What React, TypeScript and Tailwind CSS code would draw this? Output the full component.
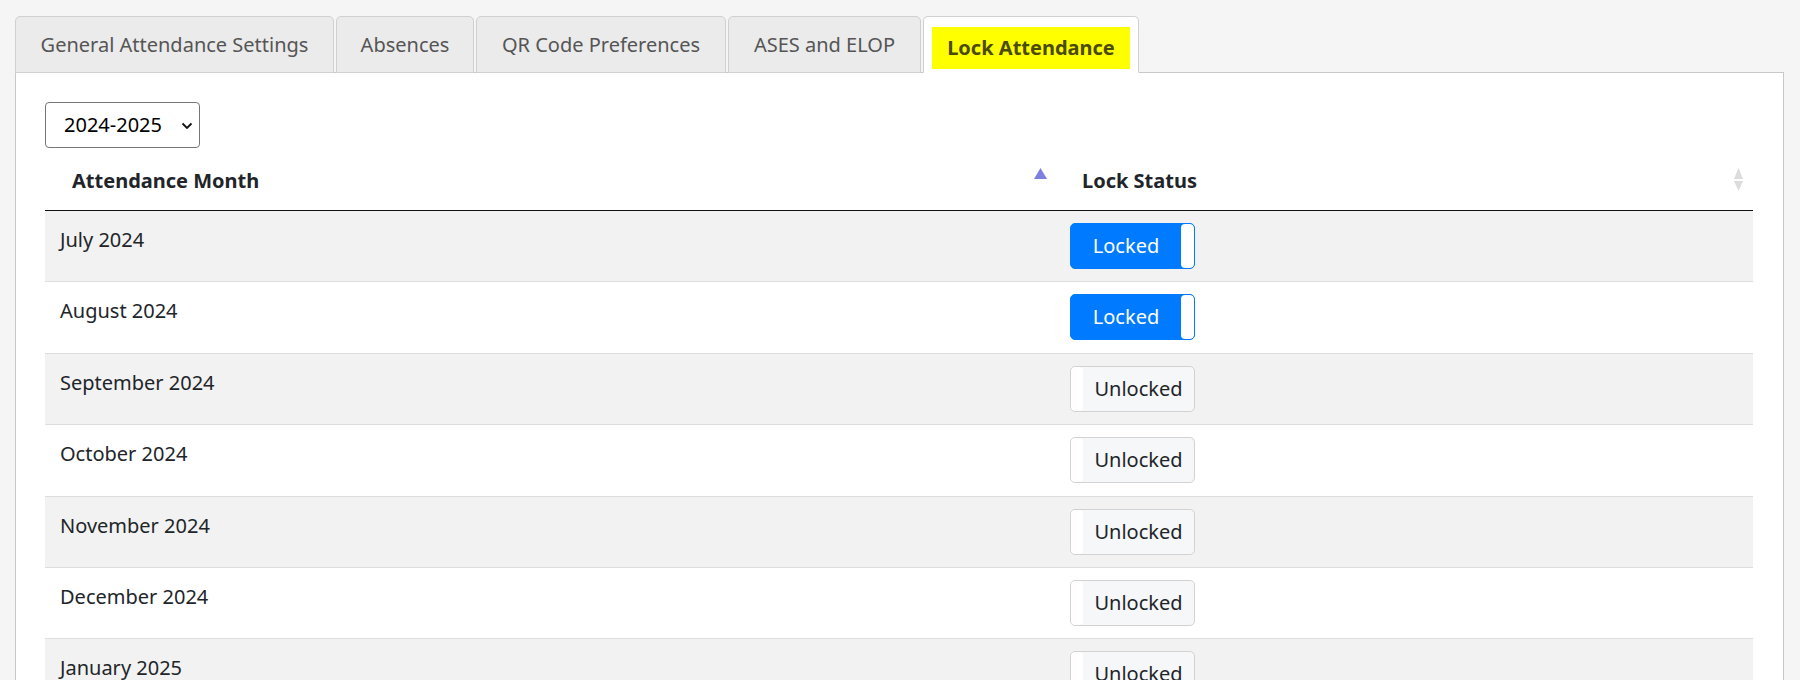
import React from 'react';

const TABS = [
  { label: 'General Attendance Settings', width: 'w-[319px]' },
  { label: 'Absences', width: 'w-[138px]' },
  { label: 'QR Code Preferences', width: 'w-[250px]' },
  { label: 'ASES and ELOP', width: 'w-[193px]' },
];

const MONTHS = [
  { month: 'July 2024', locked: true },
  { month: 'August 2024', locked: true },
  { month: 'September 2024', locked: false },
  { month: 'October 2024', locked: false },
  { month: 'November 2024', locked: false },
  { month: 'December 2024', locked: false },
  { month: 'January 2025', locked: false },
  { month: 'February 2025', locked: false },
  { month: 'March 2025', locked: false },
  { month: 'April 2025', locked: false },
  { month: 'May 2025', locked: false },
  { month: 'June 2025', locked: false },
];

const LockToggle: React.FC<{ locked: boolean }> = ({ locked }) => {
  if (locked) {
    return (
      <div className="flex h-[46px] w-[125px] overflow-hidden rounded-[5px] border border-[#007bff] bg-[#007bff]">
        <span className="flex flex-1 items-center justify-center text-white">Locked</span>
        <span className="w-[13px] rounded-[4px] bg-white" />
      </div>
    );
  }
  return (
    <div className="flex h-[46px] w-[125px] overflow-hidden rounded-[5px] border border-[#d2d2d2] bg-[#f6f7f9]">
      <span className="w-[12px] rounded-[4px] bg-white" />
      <span className="flex flex-1 items-center justify-center text-[#212529]">Unlocked</span>
    </div>
  );
};

const App: React.FC = () => {
  return (
    <div className="min-h-screen bg-[#f5f5f5] pt-[16px] font-['Noto_Sans',sans-serif] text-[20px] leading-[30px]">
      {/* tabs */}
      <div className="flex items-end gap-[2px] pl-[15px]">
        {TABS.map((tab) => (
          <div
            key={tab.label}
            className={`-mb-px flex h-[57px] ${tab.width} items-center justify-center rounded-t-[5px] border border-[#d0d0d0] bg-[#ebebeb] text-[#555]`}
          >
            {tab.label}
          </div>
        ))}
        <div className="relative z-10 -mb-px h-[57px] w-[216px] rounded-t-[5px] border border-[#d0d0d0] border-b-white bg-white px-[8px] pt-[10px] pb-[3px]">
          <span className="flex h-full items-center justify-center bg-[#ffff00] font-bold text-[#4a4a00]">Lock Attendance</span>
        </div>
      </div>

      {/* panel */}
      <div className="ml-[15px] mr-[16px] border border-[#c8c8c8] bg-white pl-[29px] pr-[30px] pt-[29px] pb-[30px]">
        <div className="relative w-[155px]">
          <select className="h-[46px] w-full appearance-none rounded-[4px] border border-[#767676] bg-white pl-[18px] text-black">
            <option>2024-2025</option>
            <option>2023-2024</option>
          </select>
          <svg className="pointer-events-none absolute right-[7px] top-[20px]" width="12" height="8" viewBox="0 0 12 8">
            <path d="M1.5 1.5 L6 6 L10.5 1.5" fill="none" stroke="#111" strokeWidth="1.8" />
          </svg>
        </div>

        <table className="w-full table-fixed border-collapse text-[#212529]">
          <colgroup>
            <col className="w-[1010px]" />
            <col />
          </colgroup>
          <thead>
            <tr>
              <th className="relative border-b border-[#111] pt-[18px] pb-[14px] pl-[27px] text-left font-bold">
                Attendance Month
                <svg className="absolute right-[8px] top-[20px]" width="13" height="11" viewBox="0 0 13 11">
                  <path d="M6.5 0 L13 11 L0 11 Z" fill="#7f7fe0" />
                </svg>
              </th>
              <th className="relative border-b border-[#111] pt-[18px] pb-[14px] pl-[27px] text-left font-bold">
                Lock Status
                <svg className="absolute right-[10px] top-[20px]" width="9" height="23" viewBox="0 0 9 23">
                  <path d="M4.5 0 L9 11 L0 11 Z" fill="#dcdcdc" />
                  <path d="M0 13 L9 13 L4.5 23 Z" fill="#dcdcdc" />
                </svg>
              </th>
            </tr>
          </thead>
          <tbody>
            {MONTHS.map((row, i) => (
              <tr key={row.month} className={`border-b border-[#dddddd] ${i % 2 === 0 ? 'bg-[#f2f2f2]' : 'bg-white'}`}>
                <td className="pl-[15px] pt-[14px] align-top">{row.month}</td>
                <td className="pl-[15px] pt-[12px] pb-[12.4px] align-top">
                  <LockToggle locked={row.locked} />
                </td>
              </tr>
            ))}
          </tbody>
        </table>
      </div>
    </div>
  );
};

export default App;
